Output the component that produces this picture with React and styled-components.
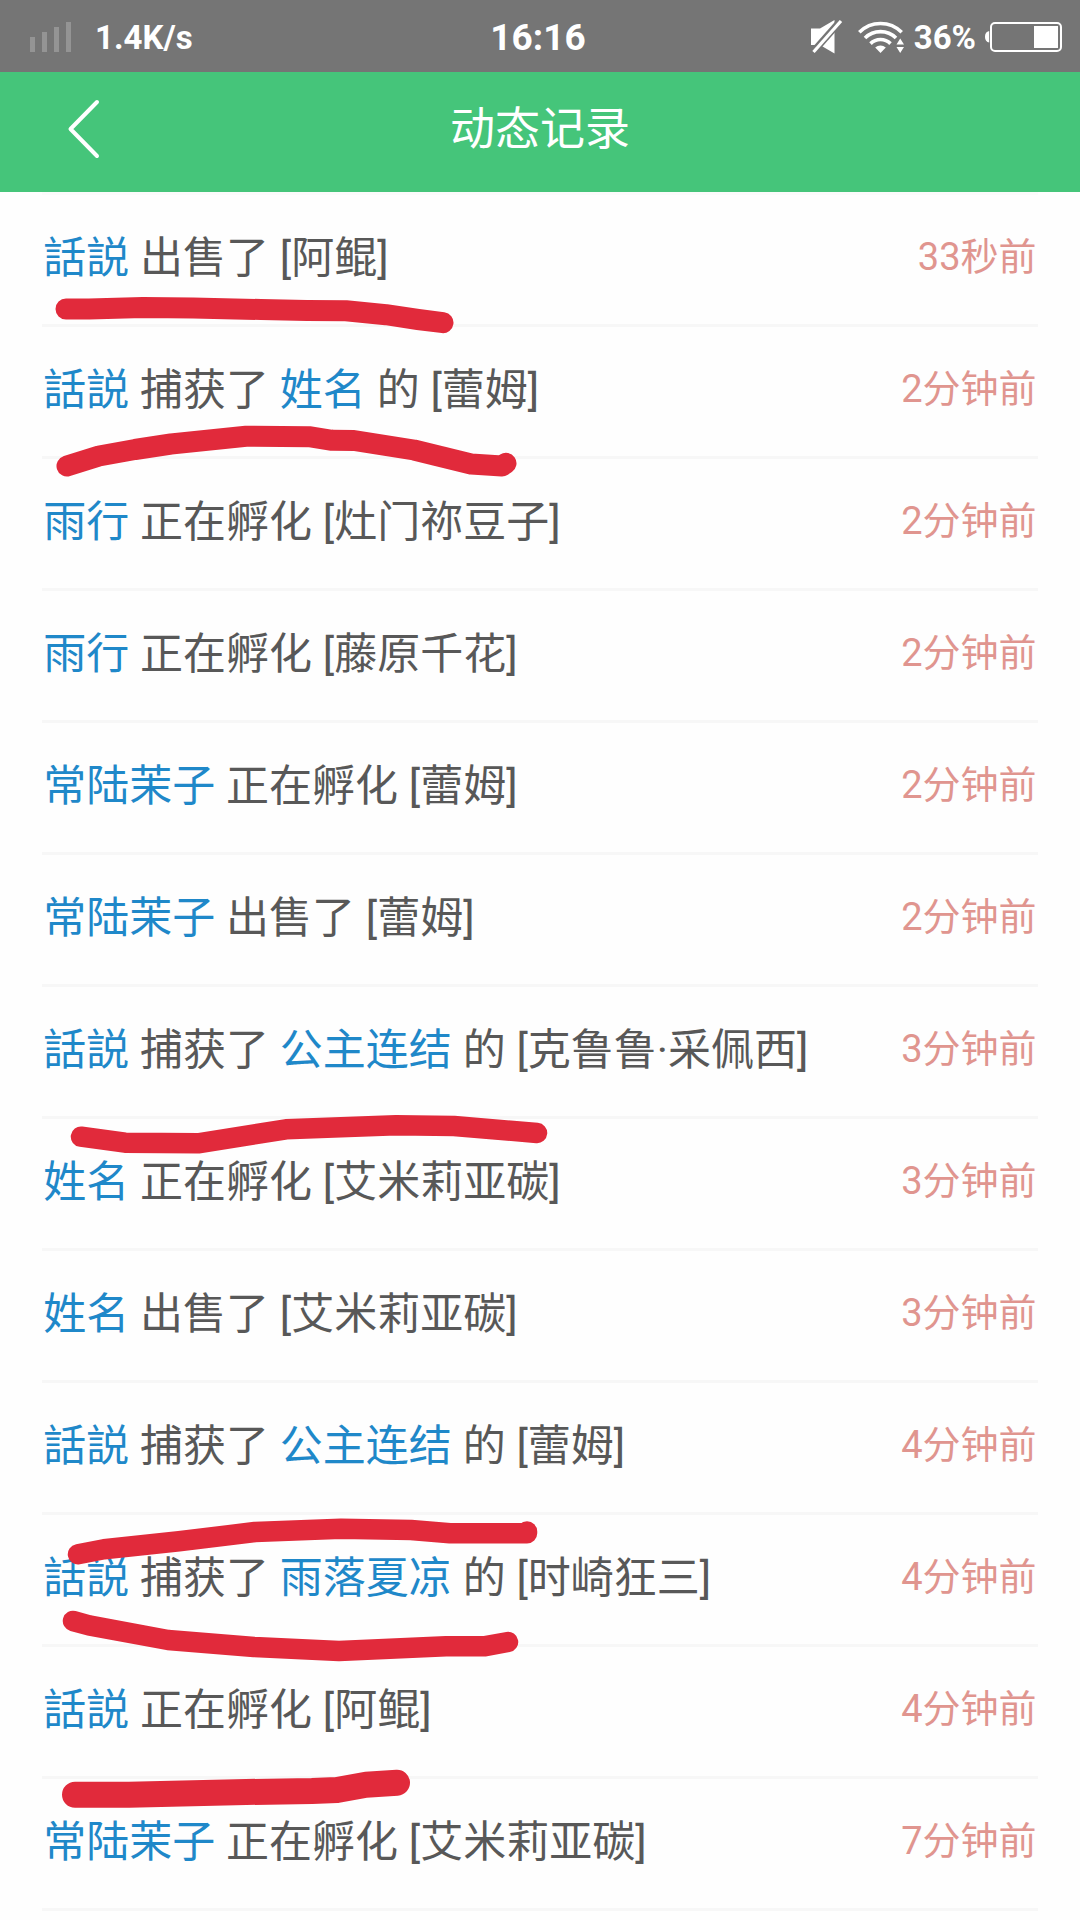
import * as React from "react";
import styled, { createGlobalStyle } from "styled-components";

const greenColor = "#45c57a";
const blueColor = "#1f88c9";
const markColor = "#e12a3b";

const GlobalStyle = createGlobalStyle`
  body {
    margin: 0;
    background-color: #fefefe;
    font-family: Roboto, "Noto Sans CJK SC", sans-serif;
  }
`;

const PageSC = styled.div`
  position: relative;
  width: 1080px;
  height: 1920px;
  overflow: hidden;
  background-color: #fefefe;
`;

const StatusBarSC = styled.div`
  display: grid;
  grid-template-columns: 1fr auto 1fr;
  align-items: center;
  height: 72px;
  box-sizing: border-box;
  padding: 2px 18px 0 30px;
  background-color: #757575;
  color: #fff;
  font-weight: 700;
`;

const StatusSideSC = styled.div`
  display: flex;
  align-items: center;
  justify-content: ${({ $end }) => ($end ? "flex-end" : "flex-start")};
  svg {
    flex: none;
  }
`;

const SpeedSC = styled.span`
  margin-left: 24px;
  font-size: 33px;
`;

const ClockSC = styled.span`
  margin-right: 16px;
  font-size: 37px;
`;

const PercentSC = styled.span`
  margin: 0 9px 0 10px;
  font-size: 33px;
`;

const HeaderSC = styled.header`
  display: grid;
  grid-template-columns: 200px 1fr 200px;
  align-items: center;
  height: 120px;
  background-color: ${greenColor};
  color: #fff;
`;

const BackSC = styled.button`
  display: flex;
  margin: 0 0 7px 66px;
  padding: 0;
  width: 36px;
  border: 0;
  background: none;
`;

const TitleSC = styled.h1`
  margin: 0 0 5px;
  font-size: 45px;
  line-height: 60px;
  font-weight: 400;
  text-align: center;
`;

const ListSC = styled.ul`
  margin: 0 42px;
  padding: 0;
  border-top: 3px solid #fbfbfb;
  list-style: none;
`;

const RecordSC = styled.li`
  display: flex;
  justify-content: space-between;
  align-items: center;
  height: 132px;
  box-sizing: border-box;
  padding: 0 1.5px 5px 1.3px;
  border-bottom: 3px solid #f7f7f7;
  white-space: nowrap;
`;

const TextSC = styled.span`
  padding-top: 1px;
  color: #585858;
  font-size: 43px;
  line-height: 60px;
  word-spacing: 0.1px;
`;

const UserSC = styled.span`
  color: ${blueColor};
`;

const TimeSC = styled.time`
  color: #e0958f;
  font-size: 38px;
  line-height: 60px;
`;

const MarksSC = styled.svg`
  position: absolute;
  top: 0;
  left: 0;
  pointer-events: none;
`;

const records = [
  { user: "話説", action: "出售了", item: "阿鲲", time: "33秒前" },
  { user: "話説", action: "捕获了", owner: "姓名", item: "蕾姆", time: "2分钟前" },
  { user: "雨行", action: "正在孵化", item: "灶门祢豆子", time: "2分钟前" },
  { user: "雨行", action: "正在孵化", item: "藤原千花", time: "2分钟前" },
  { user: "常陆茉子", action: "正在孵化", item: "蕾姆", time: "2分钟前" },
  { user: "常陆茉子", action: "出售了", item: "蕾姆", time: "2分钟前" },
  { user: "話説", action: "捕获了", owner: "公主连结", item: "克鲁鲁·采佩西", time: "3分钟前" },
  { user: "姓名", action: "正在孵化", item: "艾米莉亚碳", time: "3分钟前" },
  { user: "姓名", action: "出售了", item: "艾米莉亚碳", time: "3分钟前" },
  { user: "話説", action: "捕获了", owner: "公主连结", item: "蕾姆", time: "4分钟前" },
  { user: "話説", action: "捕获了", owner: "雨落夏凉", item: "时崎狂三", time: "4分钟前" },
  { user: "話説", action: "正在孵化", item: "阿鲲", time: "4分钟前" },
  { user: "常陆茉子", action: "正在孵化", item: "艾米莉亚碳", time: "7分钟前" },
];

// hand drawn marker strokes
const marks = [
  { width: 21, points: "66,309 89,309 143,307.5 193,308 261,309.5 307,310.6 346,310.7 386,314.7 418,319.5 443,322.7" },
  { width: 21, points: "67,466 99,456 135,449.5 171,444 246,436.3 309,436.7 332,440.3 354,440.5 414,450 471,464 502,466 506,463.3" },
  { width: 20.5, points: "81,1136.7 125,1142.7 198,1143.3 286,1129.3 396,1125.3 454,1126 537,1133" },
  { width: 20.5, points: "78,1554.3 104,1549.3 179,1541.3 255,1532 341,1528.7 411,1530 450,1533.3 527,1533.3 527,1531.5" },
  { width: 20.5, points: "73,1621 89,1625.3 168,1640 254,1647 339,1651 446,1646.3 484,1646.3 508,1642" },
  { width: 26, points: "75,1794.7 129,1794.7 246,1792 312,1791 337,1790 366,1784.7 397,1782.7" },
];

const SignalIcon = () => (
  <svg width="41" height="30" viewBox="0 0 41 30" fill="#949494">
    <path d="M0 15h5v15H0zM12 10h5v20h-5zM24 5h5v25h-5zM36 0h5v30h-5z" />
  </svg>
);

const MuteIcon = () => (
  <svg width="32" height="34" viewBox="0 0 32 34">
    <path d="M0 8.5h9L23.5 0v33.5L9 25H0z" fill="#fff" />
    <path d="M-1 35.5 32.5-2.5" stroke="#757575" strokeWidth="7" />
    <path d="M2.5 32 30 1" stroke="#fff" strokeWidth="3.2" />
  </svg>
);

const WifiIcon = () => (
  <svg width="46" height="34" viewBox="0 0 46 34" fill="none" stroke="#fff" strokeWidth="3.6">
    <path d="M1.3 12.2a30 30 0 0 1 42.4 0" />
    <path d="M7 18a22 22 0 0 1 31 0" />
    <path d="M12.5 23.6a14.2 14.2 0 0 1 20 0" />
    <path d="M17.2 27.4a8.3 8.3 0 0 1 10.6 0L22.5 33z" fill="#fff" stroke="none" />
    <path d="M38.5 24.5 42.2 18.5 46 24.5zM38.5 27 42.2 33 46 27z" fill="#fff" stroke="none" />
  </svg>
);

const BatteryIcon = () => (
  <svg width="77" height="30" viewBox="0 0 77 30">
    <path d="M4.2 9v11.5C1.5 20 0 18 0 14.7S1.5 9.5 4.2 9z" fill="#fff" />
    <rect x="6" y="1" width="70" height="28" rx="4" fill="none" stroke="#fff" strokeWidth="2" />
    <path d="M49 4h24v22H49z" fill="#fff" />
  </svg>
);

const BackIcon = () => (
  <svg width="36" height="60" viewBox="0 0 36 60" fill="none" stroke="#fff" strokeWidth="4" strokeLinecap="round" strokeLinejoin="round">
    <path d="M31 3 4.5 30 31 57" />
  </svg>
);

const MuteSC = styled.span`
  display: flex;
  margin-right: 15px;
`;

const Record = ({ user, action, owner, item, time }) => (
  <RecordSC>
    <TextSC>
      <UserSC>{user}</UserSC> {action}{" "}
      {owner && (
        <>
          <UserSC>{owner}</UserSC> 的{" "}
        </>
      )}
      [{item}]
    </TextSC>
    <TimeSC>{time}</TimeSC>
  </RecordSC>
);

const App = () => (
  <PageSC>
    <GlobalStyle />
    <StatusBarSC>
      <StatusSideSC>
        <SignalIcon />
        <SpeedSC>1.4K/s</SpeedSC>
      </StatusSideSC>
      <ClockSC>16:16</ClockSC>
      <StatusSideSC $end>
        <MuteSC>
          <MuteIcon />
        </MuteSC>
        <WifiIcon />
        <PercentSC>36%</PercentSC>
        <BatteryIcon />
      </StatusSideSC>
    </StatusBarSC>
    <HeaderSC>
      <BackSC aria-label="返回">
        <BackIcon />
      </BackSC>
      <TitleSC>动态记录</TitleSC>
    </HeaderSC>
    <ListSC>
      {records.map((record, i) => (
        <Record key={i} {...record} />
      ))}
    </ListSC>
    <MarksSC width="1080" height="1920" fill="none" stroke={markColor} strokeLinecap="round" strokeLinejoin="round">
      {marks.map(({ width, points }) => (
        <polyline key={points} points={points} strokeWidth={width} />
      ))}
    </MarksSC>
  </PageSC>
);

export default App;
